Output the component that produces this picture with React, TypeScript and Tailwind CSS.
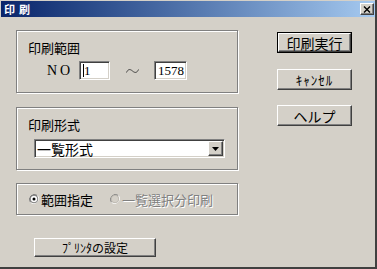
const jp = "font-['Noto_Sans_CJK_JP',sans-serif]";
const serif = "font-['Liberation_Serif','Noto_Sans_CJK_JP',serif]";

const raised =
  "border border-t-white border-l-white border-b-[#404040] border-r-[#404040] shadow-[inset_-1px_-1px_0_#808080]";
const sunken =
  "border border-t-[#808080] border-l-[#808080] border-b-white border-r-white shadow-[inset_1px_1px_0_#404040,inset_-1px_-1px_0_#d4d0c8]";
const etched =
  "border border-[#808080] shadow-[inset_1px_1px_0_#fff,1px_1px_0_#fff]";

const Radio = ({ checked, disabled }: { checked?: boolean; disabled?: boolean }) => (
  <svg width="10" height="10" viewBox="0 0 12 12" className="shrink-0">
    <path d="M10.2 1.8A6 6 0 0 0 1.8 10.2" stroke="#808080" strokeWidth="1.2" fill="none" />
    <path d="M1.8 10.2A6 6 0 0 0 10.2 1.8" stroke="#fff" strokeWidth="1.2" fill="none" />
    <circle cx="6" cy="6" r="4.6" fill={disabled ? "#d4d0c8" : "#fff"} stroke={disabled ? "#b0aca4" : "#404040"} strokeWidth="0.8" />
    {checked && <circle cx="6" cy="6" r="1.8" fill="#000" />}
  </svg>
);

const Button = ({ label, def, className = "" }: { label: string; def?: boolean; className?: string }) => (
  <div className={`${def ? "border border-black" : ""} ${className}`}>
    <div className={`${raised} h-full w-full flex items-center justify-center ${jp} text-black`}>
      {label}
    </div>
  </div>
);

export default function App() {
  return (
    <div className="w-[377px] h-[269px] bg-[#d4d0c8] border-r-2 border-b-2 border-r-[#404040] border-b-[#404040] pt-px pl-px overflow-hidden flex flex-col">
      {/* title bar */}
      <div className="h-[16px] w-[374px] bg-gradient-to-r from-[#0a246a] to-[#a6caf0] flex items-center justify-between pl-[3px] pr-[1px] shrink-0">
        <span className={`${jp} text-white text-[11px] font-bold leading-none tracking-[4px]`}>印刷</span>
        <div className={`${raised} w-[14px] h-[12px] bg-[#d4d0c8] flex items-center justify-center`}>
          <svg width="8" height="7" viewBox="0 0 8 7">
            <path d="M1 0.5L7 6.5M7 0.5L1 6.5" stroke="#000" strokeWidth="1.4" />
          </svg>
        </div>
      </div>

      <div className="flex flex-row">
        {/* left column */}
        <div className="flex flex-col pl-[15px] pt-[13px]">
          <div className={`${etched} w-[222px] h-[63px] flex flex-col pl-[11px] pt-[9px]`}>
            <span className={`${jp} text-[13px] leading-[15px] text-black`}>印刷範囲</span>
            <div className="flex items-center mt-[6px] ml-[19px]">
              <span className={`${serif} text-[14px] leading-none text-black w-[32px] tracking-[3px]`}>NO</span>
              <div className={`${sunken} bg-white w-[31px] h-[19px] flex items-center pl-[3px]`}>
                <span className="w-px h-[13px] bg-black" />
                <span className={`${serif} text-[13px] leading-none text-black`}>1</span>
              </div>
              <span className="w-[44px] flex justify-center">
                <svg width="13" height="6" viewBox="0 0 13 6">
                  <path d="M0.5 4.5C2 1 4 0.8 6.5 3C9 5.2 11 5 12.5 1.5" stroke="#333" strokeWidth="0.9" fill="none" />
                </svg>
              </span>
              <div className={`${sunken} bg-white w-[33px] h-[19px] flex items-center pl-[3px]`}>
                <span className={`${serif} text-[13px] leading-none text-black`}>1578</span>
              </div>
            </div>
          </div>

          <div className={`${etched} w-[222px] h-[63px] mt-[14px] flex flex-col pl-[11px] pt-[9px]`}>
            <span className={`${jp} text-[13px] leading-[15px] text-black`}>印刷形式</span>
            <div className={`${sunken} bg-white w-[191px] h-[19px] mt-[7px] ml-[6px] flex items-center justify-between pl-[2px] pr-[1px]`}>
              <span className={`${jp} text-[14px] leading-none text-black`}>一覧形式</span>
              <div className={`${raised} bg-[#d4d0c8] w-[15px] h-[15px] flex items-center justify-center`}>
                <svg width="7" height="4" viewBox="0 0 7 4">
                  <path d="M0 0H7L3.5 4Z" fill="#000" />
                </svg>
              </div>
            </div>
          </div>

          <div className={`${etched} w-[222px] h-[32px] mt-[13px] flex items-center pl-[12px]`}>
            <Radio checked />
            <span className={`${jp} text-[13px] leading-none text-black ml-[2px]`}>範囲指定</span>
            <div className="ml-[17px]">
              <Radio disabled />
            </div>
            <span className={`${jp} text-[13px] leading-none text-[#808080] ml-[2px] [text-shadow:1px_1px_0_#fff]`}>一覧選択分印刷</span>
          </div>

          <Button label="ﾌﾟﾘﾝﾀの設定" className="w-[122px] h-[19px] mt-[23px] ml-[18px] text-[12px] leading-none" />
        </div>

        {/* right column */}
        <div className="flex flex-col pt-[15px] ml-[39px]">
          <Button label="印刷実行" def className="w-[75px] h-[21px] text-[14px] leading-none" />
          <Button label="ｷｬﾝｾﾙ" className="w-[75px] h-[21px] mt-[16px] text-[13px] leading-none tracking-[1px]" />
          <Button label="ヘルプ" className="w-[75px] h-[21px] mt-[15px] text-[14px] leading-none" />
        </div>
      </div>
    </div>
  );
}
